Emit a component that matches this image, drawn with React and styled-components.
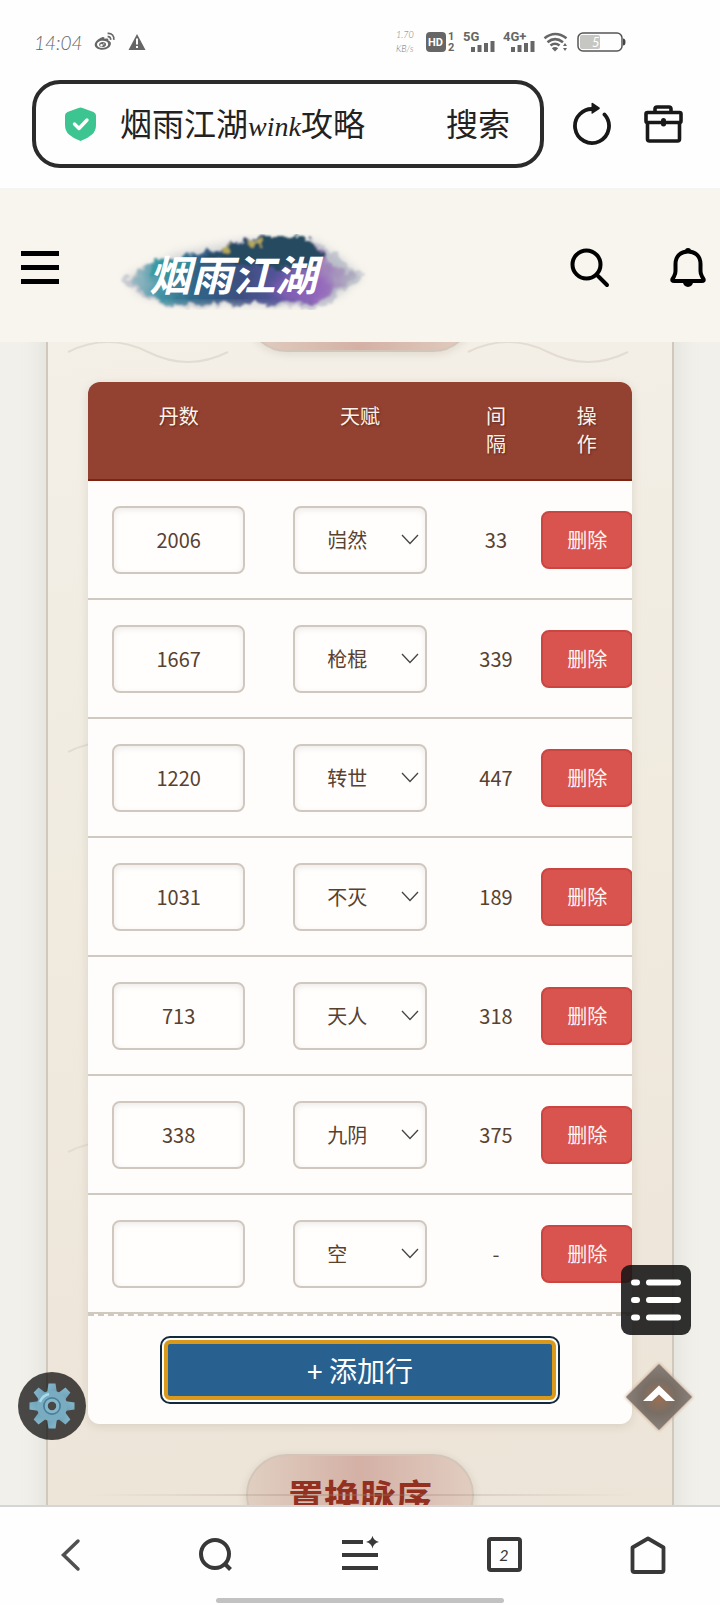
import React, { useState } from "react";
import styled, { createGlobalStyle } from "styled-components";

const sans = '"Noto Sans CJK SC", "Noto Sans", sans-serif';

const GlobalStyle = createGlobalStyle`
  *, *::before, *::after { box-sizing: border-box; }
  body { margin: 0; background: #fefefe; font-family: ${sans}; }
  button, input, select { font: inherit; margin: 0; }
`;

const Screen = styled.div`
  display: flex;
  flex-direction: column;
  height: 100vh;
  overflow: hidden;
`;

const PlainButton = styled.button`
  display: flex;
  align-items: center;
  justify-content: center;
  padding: 0;
  border: 0;
  background: none;
  color: inherit;
  cursor: pointer;
`;

/* Status bar */

const StatusBar = styled.div`
  display: flex;
  align-items: center;
  justify-content: space-between;
  height: 80px;
  padding: 4px 94px 0 34px;
  color: #666;
`;

const StatusGroup = styled.div`
  display: flex;
  align-items: center;
  gap: ${(p) => p.$gap}px;
`;

const Clock = styled.time`
  width: 48px;
  font: italic 300 19px Lato, sans-serif;
`;

const Speed = styled.div`
  width: 22px;
  font: italic 300 9px/14px Lato, sans-serif;
  color: #777;
`;

/* Address bar */

const AddressBar = styled.div`
  display: flex;
  align-items: center;
  padding: 0 36px 20px 32px;
  border-bottom: 1px solid #f4f4f4;
  color: #181818;
`;

const AddressBox = styled.div`
  display: flex;
  flex: 1;
  align-items: center;
  height: 88px;
  padding: 0 30px 0 29px;
  border: 4px solid #2b2b2b;
  border-radius: 28px;
`;

const AddressText = styled(PlainButton)`
  flex: 1;
  justify-content: flex-start;
  align-items: baseline;
  margin-left: 24px;
  padding-bottom: 4px;
  font-size: 32px;
  line-height: 44px;
  color: #222;
`;

const Latin = styled.span`
  font: italic 28px "Liberation Serif", serif;
`;

const SearchWord = styled(PlainButton)`
  padding-bottom: 4px;
  font-size: 32px;
  line-height: 44px;
  color: #222;
`;

const AddressActions = styled.div`
  display: flex;
  gap: 32px;
  margin-left: 28px;
`;

/* Site header */

const SiteHeader = styled.header`
  display: flex;
  align-items: center;
  height: 153px;
  flex: none;
  padding: 4px 13px 0 20px;
  background: #f8f5ee;
  color: #000;
`;

const Menu = styled(PlainButton)`
  flex-direction: column;
  gap: 9px;
  width: 40px;
  height: 40px;
`;

const MenuBar = styled.span`
  width: 38px;
  height: 5px;
  background: #000;
`;

const LogoLink = styled.a`
  display: flex;
  margin-left: 56px;
  padding-top: 8px;
`;

const HeaderActions = styled.div`
  display: flex;
  gap: 58px;
  margin-left: auto;
`;

/* Page content */

const Main = styled.main`
  position: relative;
  flex: 1;
  min-height: 0;
  overflow: hidden;
  background: #f2f0ea;
`;

const Panel = styled.section`
  position: relative;
  display: flex;
  flex-direction: column;
  gap: 30px;
  margin: -72px 46px 0;
  padding: 0 40px 40px;
  border: 2px solid #d0c8bc;
  border-width: 0 2px;
  background: linear-gradient(170deg, #f4f0e9 0%, #f1ece1 35%, #eee6da 75%, #ece4d7 100%);
  box-shadow: 0 0 24px rgba(125, 145, 145, 0.2);
`;

const Waves = styled.svg`
  position: absolute;
  inset: 0;
  width: 100%;
  height: 100%;
`;

const TitleRow = styled.div`
  position: relative;
  display: flex;
  justify-content: center;
  &::after {
    content: "";
    position: absolute;
    top: 40px;
    left: 0;
    right: 0;
    height: 2px;
    background: linear-gradient(90deg, transparent, rgba(150, 125, 110, 0.35), transparent);
  }
`;

const Title = styled.h2`
  min-width: 228px;
  height: 82px;
  margin: 0;
  padding: 12px 40px;
  border: 2px solid #d3c6b9;
  border-radius: 41px;
  background: linear-gradient(90deg, #e0cfc1, #d4b0a5 50%, #e1cdc0);
  box-shadow: 0 2px 8px rgba(100, 80, 60, 0.14);
  color: #93301f;
  font-size: 36px;
  line-height: 54px;
  font-weight: 700;
  text-align: center;
`;

const Card = styled.div`
  overflow: hidden;
  border-radius: 12px;
  background: #fefdfb;
`;

const CardShadow = styled.div`
  position: relative;
  border-radius: 12px;
  box-shadow: 0 2px 10px rgba(90, 80, 60, 0.14);
`;

const Table = styled.table`
  width: 100%;
  table-layout: fixed;
  border-collapse: separate;
  border-spacing: 0;
  color: #58412f;
  font-size: 20px;
  line-height: 28px;
  text-align: center;
`;

const HeadCell = styled.th`
  width: ${(p) => p.$width};
  height: 99px;
  padding: 20px 27px;
  border-bottom: 2px solid #7c2413;
  background: #934130;
  color: #fdf3ea;
  font-weight: 400;
  vertical-align: top;
  text-shadow: 1px 1px 2px rgba(0, 0, 0, 0.35);
`;

const Cell = styled.td`
  height: 119px;
  padding: ${(p) => (p.$flush ? "0" : "0 24px")};
  border-bottom: 2px solid #d0c9bf;
  vertical-align: middle;
`;

const NumberBox = styled.input`
  display: block;
  width: 100%;
  height: 68px;
  padding: 0 8px;
  border: 2px solid #d0c8be;
  border-radius: 8px;
  background: #fffefd;
  box-shadow: inset 0 2px 6px rgba(0, 0, 0, 0.08);
  color: inherit;
  text-align: center;
`;

const SelectWrap = styled.div`
  position: relative;
`;

const Select = styled.select`
  display: block;
  width: 100%;
  height: 68px;
  padding: 0 54px 0 32px;
  border: 2px solid #d0c8be;
  border-radius: 8px;
  appearance: none;
  background: #fffefd;
  box-shadow: inset 0 2px 6px rgba(0, 0, 0, 0.08);
  color: inherit;
`;

const Arrow = styled.svg`
  position: absolute;
  top: 28px;
  right: 8px;
  pointer-events: none;
`;

const DeleteButton = styled.button`
  width: 92px;
  height: 58px;
  padding: 0;
  border: 2px solid #cb4541;
  border-radius: 8px;
  background: #d9534f;
  color: #fff6f2;
  cursor: pointer;
`;

const CardFooter = styled.div`
  display: flex;
  justify-content: center;
  padding: 24px;
  border-top: 2px dashed #d0c9bf;
`;

const AddButton = styled.button`
  width: 79%;
  height: 60px;
  padding: 0;
  border: 4px solid #d9991a;
  border-radius: 6px;
  outline: 2px solid #14293d;
  outline-offset: 2px;
  background: #28608f;
  color: #fff;
  font-size: 28px;
  line-height: 40px;
  cursor: pointer;
`;

/* Floating controls */

const Floating = styled(PlainButton)`
  position: absolute;
`;

const SettingsButton = styled(Floating)`
  left: 18px;
  bottom: 65px;
  width: 68px;
  height: 68px;
  border-radius: 50%;
  background: rgba(0, 0, 0, 0.7);
`;

const ContentsButton = styled(Floating)`
  right: 29px;
  bottom: 170px;
  width: 70px;
  height: 70px;
  border-radius: 9px;
  background: rgba(20, 20, 20, 0.88);
`;

const TopButton = styled(Floating)`
  right: 25px;
  bottom: 72px;
  width: 72px;
  height: 72px;
`;

/* Browser toolbar */

const Toolbar = styled.nav`
  flex: none;
  padding-bottom: 2px;
  border-top: 2px solid #d5d5d5;
  background: #fefefe;
  color: #383838;
`;

const ToolbarItems = styled.div`
  display: grid;
  grid-template-columns: repeat(5, 1fr);
  height: 91px;
  padding-top: 4px;
`;

const TabsCount = styled.span`
  display: flex;
  align-items: center;
  justify-content: center;
  width: 35px;
  height: 35px;
  border: 4px solid #383838;
  border-radius: 4px;
  font: italic 16px Lato, sans-serif;
`;

const HomeIndicator = styled.div`
  width: 40%;
  height: 5px;
  margin: 0 auto;
  border-radius: 3px;
  background: #c2c2c2;
`;

const WeiboIcon = () => (
  <svg width="22" height="20" viewBox="0 0 22 20" fill="none">
    <path
      fill="#666"
      fillRule="evenodd"
      d="M8.2 5.2c1.6-.5 2.600.2 2.300 1.700 2.600-.9 4.300-.3 3.800 1.500 1.700.600 2.600 1.500 2.600 3.200 0 3.300-3.600 6.200-8.300 6.200S.7 15.600.7 12.800C.7 9.800 4.800 6.100 8.200 5.200zM8.500 8.700c-3.200.1-5.700 1.900-5.500 4s2.600 3.400 5.700 3.200 5.600-1.900 5.500-4-2.500-3.300-5.700-3.200z"
    />
    <path fill="#666" fillRule="evenodd" d="M8.700 9.900c2.100 0 3.500 1.100 3.400 2.600s-1.700 2.800-3.700 2.800S5 14.100 5.100 12.500s1.600-2.600 3.600-2.600zM7.500 12a1.300 1.300 0 1 0 0 2.600 1.300 1.300 0 0 0 0-2.600zM9.800 11.300a.6.6 0 1 0 0 1.200.6.6 0 0 0 0-1.200z" />
    <path d="M13.600 4.600c2.100-.2 3.300 1.200 3 3.200M13.600 1.400c4.200-.4 6.800 2.600 6.200 6.500" stroke="#666" strokeWidth="1.700" />
  </svg>
);

const WarningIcon = () => (
  <svg width="18" height="18" viewBox="0 0 18 18">
    <path d="M9 1 17.500 17H.5Z" fill="#666" />
    <path d="M9 5.500v6M9 13v2" stroke="#fff" strokeWidth="2" />
  </svg>
);

const HdIcon = () => (
  <svg width="29" height="26" viewBox="0 -2 29 26" fill="#666" fontFamily="Roboto, sans-serif" fontWeight="700">
    <rect x="0" y="1" width="20" height="20" rx="4" />
    <text x="2" y="15" fontSize="11" fill="#fff">HD</text>
    <text x="22" y="9" fontSize="11">1</text>
    <text x="22" y="20" fontSize="11">2</text>
  </svg>
);

const SignalIcon = ({ label }) => (
  <svg width="32" height="28" viewBox="0 -3 32 28" fill="#666">
    <text x="0" y="10" fontSize="13" fontFamily="Roboto, sans-serif" fontWeight="700">{label}</text>
    <path d="M8 16h4v5H8zM14.500 14h4v7h-4zM21 12h4v9h-4zM27.500 10h4v11h-4z" />
  </svg>
);

const WifiIcon = () => (
  <svg width="26" height="20" viewBox="0 0 26 20" fill="none" stroke="#666" strokeWidth="2.600">
    <path d="M1.500 6.200Q12 -2.200 23.500 6.200M4.500 10.200Q12 4 20 10.200M7.500 13.500Q12 10 16.500 13.500" />
    <path d="M12 19.500 8.800 16.200Q12 14 15.200 16.200Z" fill="#666" stroke="none" />
    <path d="m22 11 2 3h-4zM22 19l2-3h-4z" fill="#666" stroke="none" />
  </svg>
);

const BatteryIcon = () => (
  <svg width="49" height="20" viewBox="0 0 49 20">
    <rect x="1" y="1" width="44" height="18" rx="5" fill="none" stroke="#555" strokeWidth="1.500" />
    <rect x="3" y="3" width="20" height="14" rx="2" fill="#c6c7c3" />
    <path d="M46 6.500q2.500 0 2.500 3.500t-2.500 3.500z" fill="#444" />
    <text x="15" y="15" fontSize="13" fontFamily="Lato, sans-serif" fontStyle="italic" fill="#fff">5</text>
  </svg>
);

const ShieldIcon = () => (
  <svg width="31" height="34" viewBox="0 0 31 34">
    <path d="M15.500.5q1 0 2 .5l11 4q2.500 1 2.500 3.500V18q0 6-4 9.500-5 4.500-11.500 6.500Q9 32 4 27.500 0 24 0 18V8.500Q0 6 2.500 5l11-4q1-.5 2-.5z" fill="#3cc591" />
    <path d="m9.500 17 4.500 4.500 8-8.500" fill="none" stroke="#fff" strokeWidth="3.400" strokeLinecap="round" strokeLinejoin="round" />
  </svg>
);

const ReloadIcon = () => (
  <svg width="40" height="44" viewBox="0 0 40 44">
    <path d="M32.500 12.500A17 17 0 1 1 22.500 7.200" fill="none" stroke="#181818" strokeWidth="3.800" strokeLinecap="round" />
    <path d="M19.500 1.500q.2-1.200 1.400-.6l6.600 4.600q.8.800 0 1.500l-6.800 4.600q-1.200.5-1.200-.7z" fill="#181818" />
  </svg>
);

const CaseIcon = () => (
  <svg width="40" height="44" viewBox="0 0 40 44" fill="none" stroke="#181818" strokeWidth="3.600" strokeLinejoin="round">
    <path d="M11 9.500V7q0-2 2-2h12q2 0 2 2v2.500" />
    <rect x="2" y="10.500" width="35" height="10" rx="1.500" />
    <path d="M3.500 20.500V37q0 2 2 2h28q2 0 2-2V20.500" />
    <path d="M19.500 18.500v3.500" strokeWidth="5" strokeLinecap="round" />
  </svg>
);

const Logo = () => (
  <svg width="252" height="76" viewBox="0 0 252 76" role="img" aria-label="烟雨江湖">
    <defs>
      <linearGradient id="ink" x1="0" x2="1">
        <stop offset="0" stopColor="#7fb5bf" stopOpacity=".5" />
        <stop offset=".14" stopColor="#4594a4" />
        <stop offset=".3" stopColor="#2f6286" />
        <stop offset=".5" stopColor="#3d4f80" />
        <stop offset=".66" stopColor="#55549a" />
        <stop offset=".84" stopColor="#9a72bb" />
        <stop offset="1" stopColor="#a8a0b8" stopOpacity=".5" />
      </linearGradient>
      <filter id="brush" x="-10%" y="-20%" width="120%" height="140%">
        <feTurbulence type="fractalNoise" baseFrequency=".09" numOctaves="4" seed="7" result="noise" />
        <feDisplacementMap in="SourceGraphic" in2="noise" scale="16" xChannelSelector="R" yChannelSelector="G" />
        <feGaussianBlur stdDeviation="1.200" />
      </filter>
      <filter id="soft" x="-30%" y="-60%" width="160%" height="220%">
        <feGaussianBlur stdDeviation="5" />
      </filter>
    </defs>
    <path d="M10 44 60 20 130 6 200 8 226 26 246 42 222 62 160 72 60 70 24 60Z" fill="#8d96a8" opacity=".35" filter="url(#soft)" />
    <g filter="url(#brush)">
      <path d="M8 45 30 30 66 22 100 14 140 4 196 4 212 16 228 24 232 36 250 43 224 56 212 72 170 75 140 70 90 74 46 73 20 58Z" fill="#9aa2b5" opacity=".45" />
      <path d="M14 44 34 29 74 21 108 13 142 4 190 4 204 16 216 30 238 43 214 56 204 68 150 70 90 70 48 70 26 57Z" fill="url(#ink)" />
      <path d="M85 24 120 11 146 4 192 4 208 22 196 34 130 32Z" fill="#264b61" />
      <path d="M38 28 84 24 76 36 34 44Z" fill="#2d9a9d" opacity=".7" />
      <path d="M104 12h12v6h-12zM132 7h14v4h-14z" fill="#b4a95c" />
    </g>
    <ellipse cx="186" cy="54" rx="30" ry="12" fill="#8f5fbd" opacity=".7" filter="url(#soft)" />
    <ellipse cx="100" cy="76" rx="70" ry="5" fill="#f8f5ee" opacity=".6" filter="url(#soft)" />
    <text x="33" y="57" fontSize="42" fontWeight="700" fontStyle="italic" fontFamily='"Noto Sans CJK SC", sans-serif' fill="#fff">烟雨江湖</text>
  </svg>
);

const SearchIcon = () => (
  <svg width="42" height="42" viewBox="0 0 42 42" fill="none" stroke="#000" strokeWidth="4" strokeLinecap="round">
    <circle cx="17.500" cy="17.500" r="14" />
    <path d="m28 28 10 10" />
  </svg>
);

const BellIcon = () => (
  <svg width="38" height="42" viewBox="0 0 38 42">
    <path d="M19 4.500C11.500 4.500 6.500 9.500 6.500 17V24q0 3-1.500 5.500L3.500 32q-.8 2 1.500 2h28q2.300 0 1.500-2L33 29.500Q31.500 27 31.500 24V17C31.500 9.500 26.500 4.500 19 4.500Z" fill="none" stroke="#000" strokeWidth="4" strokeLinejoin="round" />
    <path d="M16 4a3 3 0 0 1 6 0zM14 35h10a5 5 0 0 1-10 0z" fill="#000" />
  </svg>
);

const GearIcon = () => (
  <svg width="46" height="46" viewBox="-23 -23 46 46">
    <defs>
      <linearGradient id="gear" x1="0" y1="0" x2="1" y2="1">
        <stop offset="0" stopColor="#86b9cd" />
        <stop offset="1" stopColor="#6c9fb5" />
      </linearGradient>
    </defs>
    <g fill="url(#gear)">
      {[0, 45, 90, 135, 180, 225, 270, 315].map((angle) => (
        <path key={angle} d="M-3.500-22.500h7l1.500 10h-10z" transform={`rotate(${angle})`} />
      ))}
    </g>
    <circle r="11" fill="none" stroke="#79acc1" strokeWidth="8.500" />
    <path d="M-12-4A12.500 12.500 0 0 1-3-12" fill="none" stroke="#a6dcec" strokeWidth="2.500" />
    <circle r="8" fill="none" stroke="#4c7f98" strokeWidth="2" />
    <circle r="5.500" fill="none" stroke="#83b7cb" strokeWidth="3.500" />
    <circle r="4.200" fill="#4a4744" />
  </svg>
);

const ListIcon = () => (
  <svg width="50" height="42" viewBox="0 0 50 42" stroke="#fff" strokeWidth="6" strokeLinecap="round">
    <path d="M3 3.500h3M18 3.500h29M3 21h3M18 21h29M3 38.500h3M18 38.500h29" />
  </svg>
);

const UpIcon = () => (
  <svg width="72" height="72" viewBox="0 0 72 72">
    <defs>
      <radialGradient id="glow">
        <stop offset="0" stopColor="#9c6f52" />
        <stop offset=".5" stopColor="#796e65" />
        <stop offset="1" stopColor="#87807a" />
      </radialGradient>
      <filter id="halo">
        <feGaussianBlur stdDeviation="1.500" />
      </filter>
    </defs>
    <path d="M36 2 70 36 36 70 2 36Z" fill="#c39a80" filter="url(#halo)" opacity=".8" />
    <path d="M36 3 69 36 36 69 3 36Z" fill="url(#glow)" />
    <path d="M36 24.500 52 40h-9l-7-6.500L29 40h-9Z" fill="#fff" />
  </svg>
);

const BackIcon = () => (
  <svg width="40" height="40" viewBox="0 0 40 40" fill="none" stroke="#505050" strokeWidth="3.500" strokeLinecap="round">
    <path d="M26 6 11.500 20 26 34" />
  </svg>
);

const FindIcon = () => (
  <svg width="40" height="40" viewBox="0 0 40 40" fill="none" stroke="#383838" strokeWidth="4">
    <circle cx="19" cy="19" r="14" />
    <path d="m28.500 28.500 6 6" />
  </svg>
);

const SparkMenuIcon = () => (
  <svg width="40" height="40" viewBox="0 0 40 40" stroke="#383838" strokeWidth="4">
    <path d="M2 7h21M2 20h36M2 33h36" />
    <path d="M32.500.8q1 5 6.500 6.200-5.500 1.200-6.500 6.500-1-5.300-6.500-6.500 5.500-1.200 6.500-6.200z" fill="#383838" stroke="none" />
  </svg>
);

const HomeIcon = () => (
  <svg width="40" height="40" viewBox="0 0 40 40" fill="none" stroke="#383838" strokeWidth="3.800" strokeLinejoin="round">
    <path d="M4.500 12.500 20 3.500l15.500 9V35q0 2-2 2h-27q-2 0-2-2z" />
  </svg>
);

const talents = ["岿然", "枪棍", "转世", "不灭", "天人", "九阴", "空"];

const initialRows = [
  { id: 1, count: "2006", talent: "岿然" },
  { id: 2, count: "1667", talent: "枪棍" },
  { id: 3, count: "1220", talent: "转世" },
  { id: 4, count: "1031", talent: "不灭" },
  { id: 5, count: "713", talent: "天人" },
  { id: 6, count: "338", talent: "九阴" },
  { id: 7, count: "", talent: "空" },
];

// The interval is the drop from the previous row; the first row is measured from the cap.
const CAP = 2039;
const intervalOf = (rows, index) => {
  if (rows[index].count === "") return "-";
  return (index === 0 ? CAP : Number(rows[index - 1].count)) - Number(rows[index].count);
};

export default function App() {
  const [rows, setRows] = useState(initialRows);
  const update = (id, patch) => setRows(rows.map((r) => (r.id === id ? { ...r, ...patch } : r)));

  return (
    <>
      <GlobalStyle />
      <Screen>
        <StatusBar>
          <StatusGroup $gap={12}>
            <Clock>14:04</Clock>
            <WeiboIcon />
            <WarningIcon />
          </StatusGroup>
          <StatusGroup $gap={8}>
            <Speed>1.70<br />KB/s</Speed>
            <HdIcon />
            <SignalIcon label="5G" />
            <SignalIcon label="4G+" />
            <WifiIcon />
            <BatteryIcon />
          </StatusGroup>
        </StatusBar>

        <AddressBar>
          <AddressBox>
            <ShieldIcon />
            <AddressText type="button">烟雨江湖<Latin>wink</Latin>攻略</AddressText>
            <SearchWord type="button">搜索</SearchWord>
          </AddressBox>
          <AddressActions>
            <PlainButton type="button" aria-label="刷新"><ReloadIcon /></PlainButton>
            <PlainButton type="button" aria-label="工具箱"><CaseIcon /></PlainButton>
          </AddressActions>
        </AddressBar>

        <SiteHeader>
          <Menu type="button" aria-label="菜单">
            <MenuBar /><MenuBar /><MenuBar />
          </Menu>
          <LogoLink href="#home"><Logo /></LogoLink>
          <HeaderActions>
            <PlainButton type="button" aria-label="搜索"><SearchIcon /></PlainButton>
            <PlainButton type="button" aria-label="通知"><BellIcon /></PlainButton>
          </HeaderActions>
        </SiteHeader>

        <Main>
          <Panel>
            <Waves aria-hidden="true">
              <defs>
                <pattern id="waves" width="400" height="400" patternUnits="userSpaceOnUse">
                  <path d="M20 82q40-20 80 0t80 0" fill="none" stroke="#e3dcd2" strokeWidth="2" />
                </pattern>
              </defs>
              <rect width="100%" height="100%" fill="url(#waves)" />
            </Waves>
            <TitleRow aria-hidden="true"><Title as="div" /></TitleRow>
            <CardShadow>
              <Card>
                <Table>
                  <thead>
                    <tr>
                      <HeadCell $width="33.33%">丹数</HeadCell>
                      <HeadCell $width="33.33%">天赋</HeadCell>
                      <HeadCell $width="16.67%">间隔</HeadCell>
                      <HeadCell $width="16.67%">操作</HeadCell>
                    </tr>
                  </thead>
                  <tbody>
                    {rows.map((row, i) => (
                      <tr key={row.id}>
                        <Cell>
                          <NumberBox
                            aria-label="丹数"
                            inputMode="numeric"
                            value={row.count}
                            onChange={(e) => update(row.id, { count: e.target.value })}
                          />
                        </Cell>
                        <Cell>
                          <SelectWrap>
                            <Select
                              aria-label="天赋"
                              value={row.talent}
                              onChange={(e) => update(row.id, { talent: e.target.value })}
                            >
                              {talents.map((t) => <option key={t}>{t}</option>)}
                            </Select>
                            <Arrow width="18" height="11" viewBox="0 0 18 11" fill="none" stroke="#444" strokeWidth="1.300">
                              <path d="m1 1 8 8.500L17 1" />
                            </Arrow>
                          </SelectWrap>
                        </Cell>
                        <Cell $flush>{intervalOf(rows, i)}</Cell>
                        <Cell $flush>
                          <DeleteButton type="button" onClick={() => setRows(rows.filter((r) => r.id !== row.id))}>
                            删除
                          </DeleteButton>
                        </Cell>
                      </tr>
                    ))}
                  </tbody>
                </Table>
                <CardFooter>
                  <AddButton
                    type="button"
                    onClick={() => setRows([...rows, { id: Date.now(), count: "", talent: "空" }])}
                  >
                    + 添加行
                  </AddButton>
                </CardFooter>
              </Card>
            </CardShadow>
            <TitleRow><Title>置换脉序</Title></TitleRow>
          </Panel>

          <SettingsButton type="button" aria-label="设置"><GearIcon /></SettingsButton>
          <ContentsButton type="button" aria-label="目录"><ListIcon /></ContentsButton>
          <TopButton type="button" aria-label="返回顶部"><UpIcon /></TopButton>
        </Main>

        <Toolbar>
          <ToolbarItems>
            <PlainButton type="button" aria-label="后退"><BackIcon /></PlainButton>
            <PlainButton type="button" aria-label="查找"><FindIcon /></PlainButton>
            <PlainButton type="button" aria-label="更多"><SparkMenuIcon /></PlainButton>
            <PlainButton type="button"><TabsCount>2</TabsCount></PlainButton>
            <PlainButton type="button" aria-label="主页"><HomeIcon /></PlainButton>
          </ToolbarItems>
          <HomeIndicator />
        </Toolbar>
      </Screen>
    </>
  );
}
